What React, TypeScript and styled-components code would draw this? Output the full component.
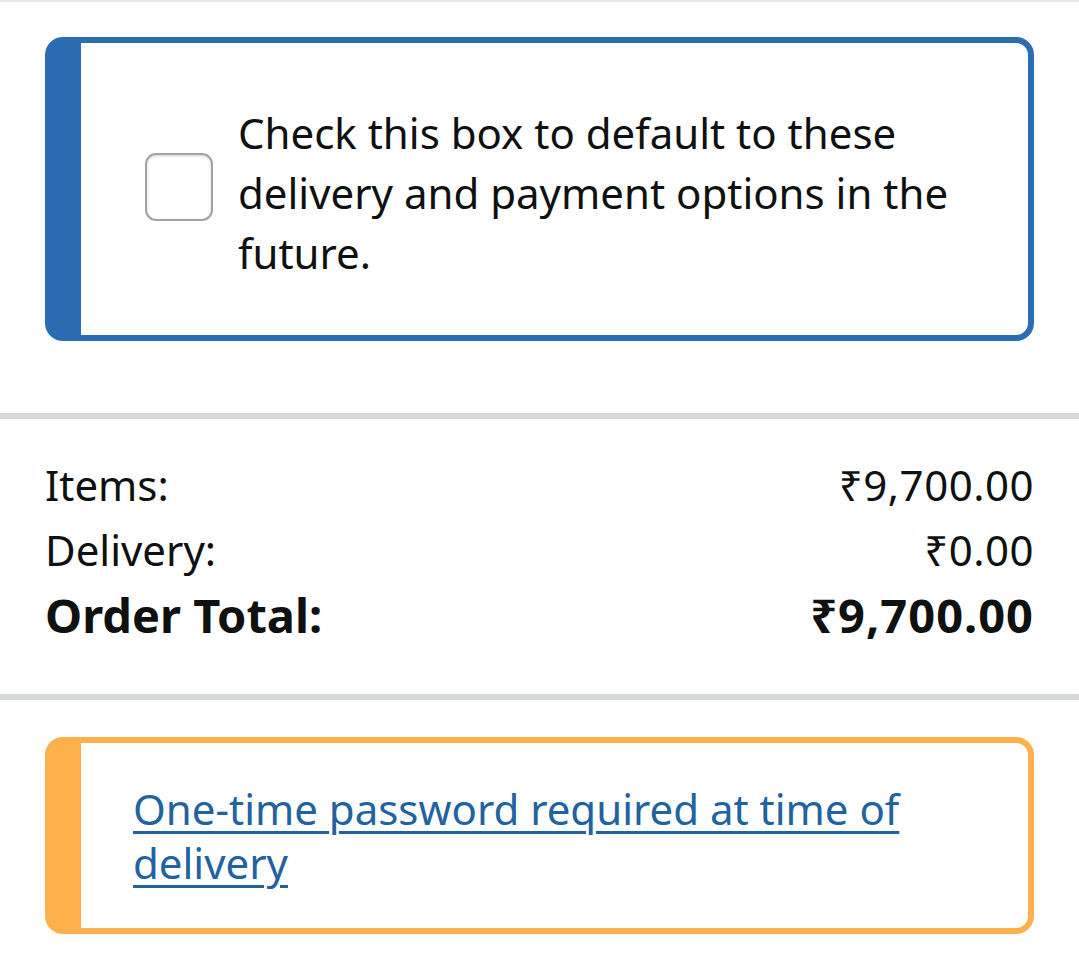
import React from "react";
import styled, { createGlobalStyle } from "styled-components";

const Global = createGlobalStyle`
  html, body { margin: 0; padding: 0; background: #fff; }
  body { font-family: "Noto Sans", "DejaVu Sans", sans-serif; color: #0f1111; }
`;

const Page = styled.div`
  width: 1079px;
  display: flex;
  flex-direction: column;
`;

const Rule = styled.div<{ $thick?: boolean }>`
  height: ${(p) => (p.$thick ? "6px" : "2px")};
  background: ${(p) => (p.$thick ? "#d5d9d9" : "#e3e6e6")};
`;

const Section = styled.div<{ $top: number; $bottom: number }>`
  padding: ${(p) => p.$top}px 45px ${(p) => p.$bottom}px 45px;
`;

const AlertBox = styled.div<{ $color: string; $pt: number; $pb: number }>`
  border: 6px solid ${(p) => p.$color};
  border-left-width: 36px;
  border-radius: 18px;
  padding: ${(p) => p.$pt}px 40px ${(p) => p.$pb}px 52px;
  display: flex;
  align-items: flex-start;
  gap: 25px;
`;

const CheckBox = styled.span`
  flex: none;
  width: 64px;
  height: 64px;
  margin-top: 50px;
  margin-left: 12px;
  border: 2px solid #a3a3a3;
  border-radius: 11px;
  box-shadow: inset 0 1px 3px rgba(0, 0, 0, 0.18);
  background: #fff;
`;

const CheckText = styled.p`
  margin: 0;
  font-size: 42px;
  line-height: 60px;
`;

const Row = styled.div<{ $bold?: boolean }>`
  display: flex;
  justify-content: space-between;
  align-items: center;
  height: 65px;
  font-size: ${(p) => (p.$bold ? "47px" : "42px")};
  font-weight: ${(p) => (p.$bold ? 700 : 400)};
`;

const Amount = styled.span<{ $wide?: boolean }>`
  letter-spacing: ${(p) => (p.$wide ? "1px" : "0.5px")};
`;

const Link = styled.a`
  font-size: 42px;
  line-height: 54px;
  color: #2162a1;
  text-decoration: underline;
  text-decoration-thickness: 3px;
  text-underline-offset: 6px;
`;

export default function App() {
  return (
    <Page>
      <Global />
      <Rule />
      <Section $top={35} $bottom={72}>
        <AlertBox $color="#2a6db3" $pt={60} $pb={52}>
          <CheckBox />
          <CheckText>
            Check this box to default to these delivery and payment options in the future.
          </CheckText>
        </AlertBox>
      </Section>
      <Rule $thick />
      <Section $top={33} $bottom={47}>
        <Row>
          <span>Items:</span>
          <Amount>₹9,700.00</Amount>
        </Row>
        <Row>
          <span>Delivery:</span>
          <Amount>₹0.00</Amount>
        </Row>
        <Row $bold>
          <span>Order Total:</span>
          <Amount $wide>₹9,700.00</Amount>
        </Row>
      </Section>
      <Rule $thick />
      <Section $top={37} $bottom={37}>
        <AlertBox $color="#fdb04c" $pt={39} $pb={38}>
          <Link href="#">One-time password required at time of delivery</Link>
        </AlertBox>
      </Section>
      <Rule />
    </Page>
  );
}
